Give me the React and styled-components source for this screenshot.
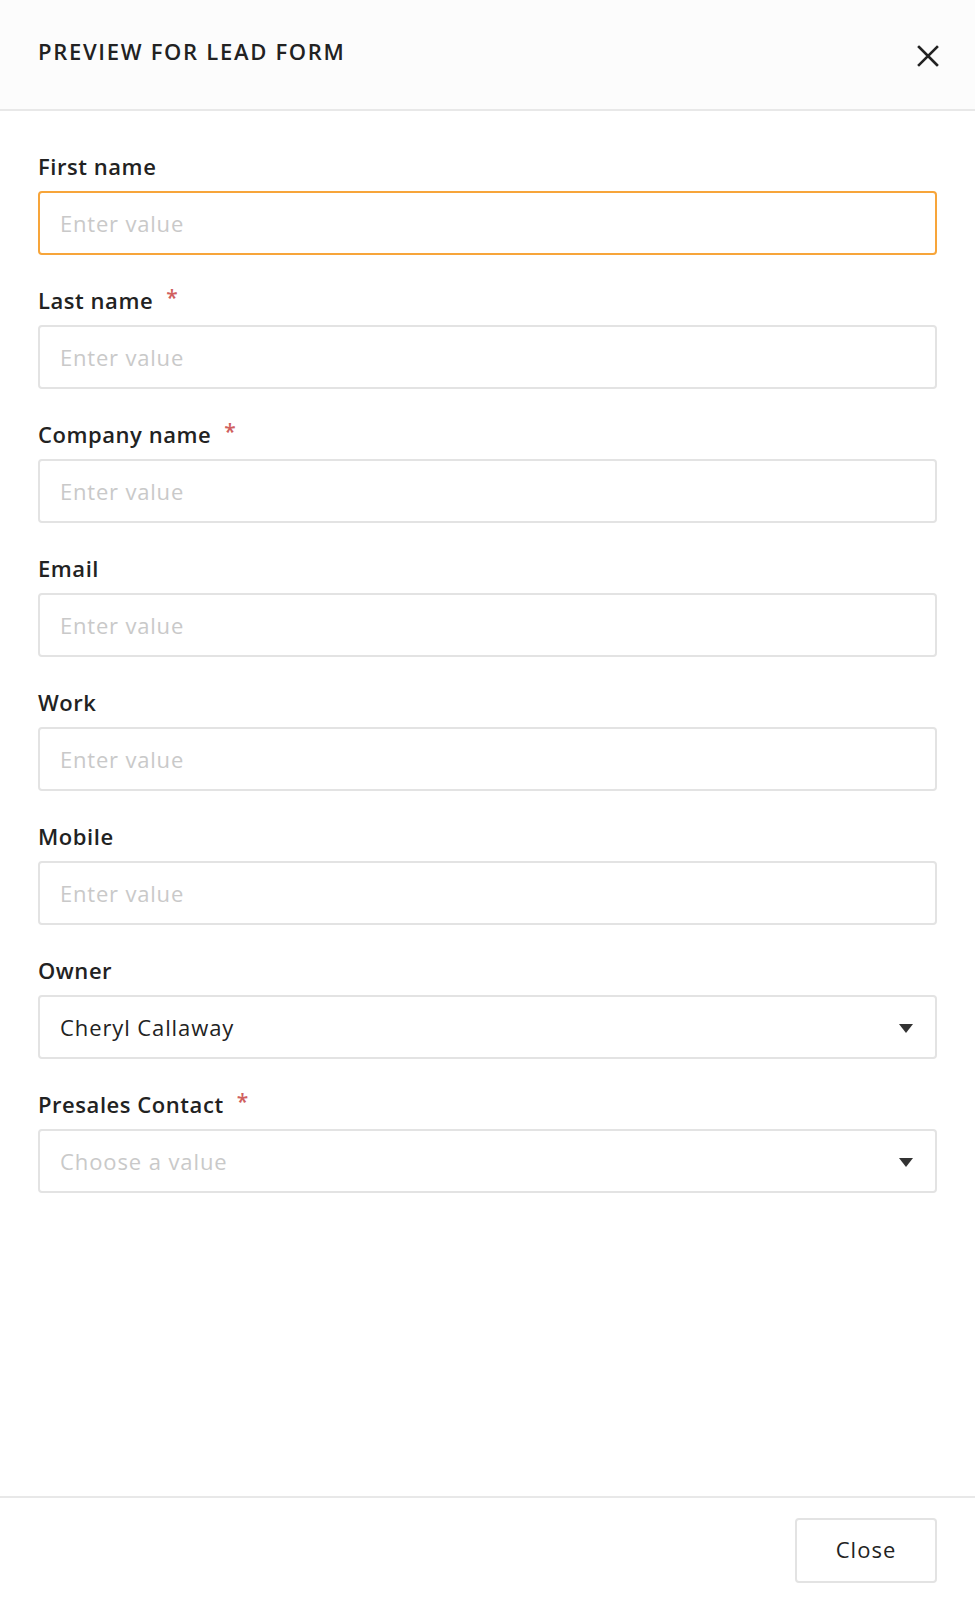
import React from "react";
import styled, { createGlobalStyle } from "styled-components";

const Global = createGlobalStyle`
  html, body { margin: 0; padding: 0; background: #fff; }
  body { font-family: "Open Sans", Lato, sans-serif; }
  * { box-sizing: border-box; }
`;

const Page = styled.div`
  display: flex;
  flex-direction: column;
  min-height: 1600px;
  background: #fff;
`;

const Header = styled.header`
  height: 111px;
  display: flex;
  align-items: center;
  justify-content: space-between;
  padding: 0 30px 8px 38px;
  background: #fcfcfc;
  border-bottom: 2px solid #e8e8e8;
`;

const Title = styled.h1`
  margin: 0;
  font-size: 22px;
  font-weight: 600;
  color: #222;
  letter-spacing: 1.7px;
`;

const CloseIcon = styled.button`
  width: 34px;
  height: 34px;
  padding: 0;
  border: 0;
  background: none;
  display: flex;
  align-items: center;
  justify-content: center;
  margin-top: 10px;
  cursor: pointer;
`;

const Body = styled.main`
  flex: 1;
  display: flex;
  flex-direction: column;
  gap: 33px;
  padding: 43px 38px 0 38px;
`;

const Field = styled.div`
  display: flex;
  flex-direction: column;
  gap: 13px;
`;

const Label = styled.label`
  display: flex;
  align-items: flex-start;
  gap: 13px;
  height: 24px;
  line-height: 24px;
  font-size: 22px;
  font-weight: 600;
  color: #222;
  letter-spacing: 0.55px;
`;

const Required = styled.span`
  color: #d0605e;
  font-size: 21px;
  line-height: 18px;
  font-weight: 600;
`;

const Input = styled.input`
  height: 64px;
  width: 100%;
  padding: 0 20px;
  border: 2px solid ${(p) => (p.$focused ? "#f7a53a" : "#e3e3e3")};
  border-radius: 4px;
  font-family: inherit;
  font-size: 22px;
  letter-spacing: 0.8px;
  color: #333;
  background: #fff;
  outline: none;
  &::placeholder { color: #c9c9c9; }
`;

const Select = styled.div`
  height: 64px;
  display: flex;
  align-items: center;
  justify-content: space-between;
  padding: 0 22px 0 20px;
  border: 2px solid #e3e3e3;
  border-radius: 4px;
  font-size: 22px;
  letter-spacing: 0.9px;
  color: ${(p) => (p.$placeholder ? "#c9c9c9" : "#222")};
  background: #fff;
`;

const Caret = styled.span`
  width: 0;
  height: 0;
  border-left: 7px solid transparent;
  border-right: 7px solid transparent;
  border-top: 9px solid #333;
  margin-top: 2px;
`;

const Footer = styled.footer`
  display: flex;
  justify-content: flex-end;
  padding: 20px 38px 17px;
  border-top: 2px solid #e8e8e8;
`;

const Button = styled.button`
  width: 142px;
  height: 65px;
  border: 2px solid #e3e3e3;
  border-radius: 4px;
  background: #fff;
  font-family: inherit;
  font-size: 22px;
  letter-spacing: 1px;
  color: #222;
  padding: 0 0 4px;
  cursor: pointer;
`;

const fields = [
  { label: "First name", focused: true },
  { label: "Last name", required: true },
  { label: "Company name", required: true },
  { label: "Email" },
  { label: "Work" },
  { label: "Mobile" },
];

export default function App() {
  return (
    <Page>
      <Global />
      <Header>
        <Title>PREVIEW FOR LEAD FORM</Title>
        <CloseIcon aria-label="Close">
          <svg width="22" height="22" viewBox="0 0 22 22">
            <path d="M2 2 L20 20 M20 2 L2 20" stroke="#222" strokeWidth="2.6" strokeLinecap="square" />
          </svg>
        </CloseIcon>
      </Header>
      <Body>
        {fields.map((f) => (
          <Field key={f.label}>
            <Label>
              {f.label}
              {f.required && <Required>*</Required>}
            </Label>
            <Input placeholder="Enter value" $focused={f.focused} />
          </Field>
        ))}
        <Field>
          <Label>Owner</Label>
          <Select>
            Cheryl Callaway
            <Caret />
          </Select>
        </Field>
        <Field>
          <Label>
            Presales Contact
            <Required>*</Required>
          </Label>
          <Select $placeholder>
            Choose a value
            <Caret />
          </Select>
        </Field>
      </Body>
      <Footer>
        <Button>Close</Button>
      </Footer>
    </Page>
  );
}
